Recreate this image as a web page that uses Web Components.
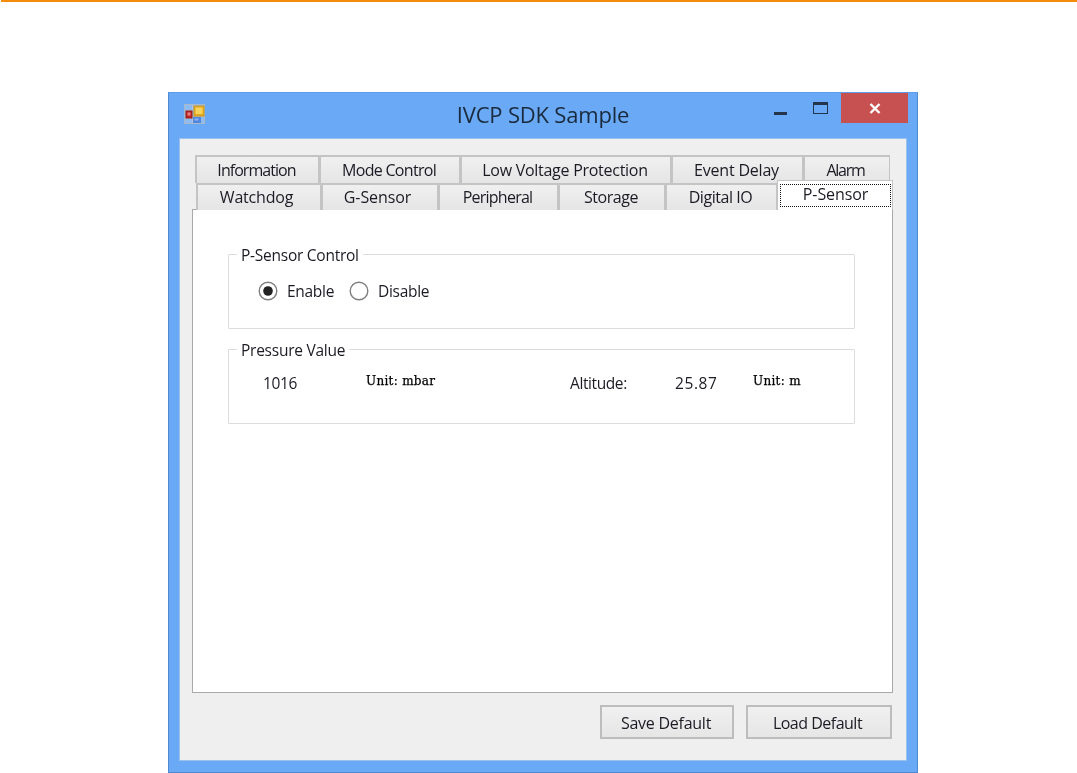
<!DOCTYPE html>
<html><head><meta charset="utf-8"><title>IVCP SDK Sample</title>
<style>
html,body{margin:0;padding:0;background:#fff;height:773px;overflow:hidden}
body{font-family:"Open Sans","Noto Sans",sans-serif;color:#1b1b1f}
.top{height:2px;margin-left:1px;background:#f58b0a}
ivcp-window{margin:90px 0 0 168px}
</style></head><body>
<div class="top"></div>
<ivcp-window title-text="IVCP SDK Sample">
  <ivcp-tabs slot="tabs">
    <div slot="row1" style="display:contents;--lh:26px">
      <ivcp-tab w="124" style="letter-spacing:-.95px">Information</ivcp-tab><ivcp-tab w="141" style="letter-spacing:-.7px">Mode Control</ivcp-tab><ivcp-tab w="211" style="letter-spacing:-.27px">Low Voltage Protection</ivcp-tab><ivcp-tab w="132" style="letter-spacing:-.2px">Event Delay</ivcp-tab><ivcp-tab w="87" style="letter-spacing:-1.3px;padding-right:3px">Alarm</ivcp-tab>
    </div>
    <div slot="row2" style="display:contents">
      <ivcp-tab w="125" style="letter-spacing:-.2px;padding-right:5px">Watchdog</ivcp-tab><ivcp-tab w="117" style="letter-spacing:-.1px;padding-right:5px">G-Sensor</ivcp-tab><ivcp-tab w="120" style="letter-spacing:-.75px">Peripheral</ivcp-tab><ivcp-tab w="107">Storage</ivcp-tab><ivcp-tab w="112">Digital IO</ivcp-tab><ivcp-tab w="116" selected style="letter-spacing:-.1px">P-Sensor</ivcp-tab>
    </div>
  </ivcp-tabs>
  <ivcp-panel slot="panel">
    <ivcp-group legend="P-Sensor Control">
      <div style="display:flex;gap:15px;padding:16px 0 0 29px">
        <ivcp-radio checked>Enable</ivcp-radio><ivcp-radio>Disable</ivcp-radio>
      </div>
    </ivcp-group>
    <ivcp-group legend="Pressure Value">
      <ivcp-readout></ivcp-readout>
    </ivcp-group>
  </ivcp-panel>
  <ivcp-button slot="actions" w="134" style="letter-spacing:-.25px;padding-right:2px">Save Default</ivcp-button>
  <ivcp-button slot="actions" w="146" style="letter-spacing:-.5px;padding-right:3px">Load Default</ivcp-button>
</ivcp-window>
<script>
function def(name, css, html, init){
  customElements.define(name, class extends HTMLElement{
    constructor(){super();const r=this.attachShadow({mode:'open'});r.innerHTML='<style>'+css+'</style>'+html;}
    connectedCallback(){ if(init) init(this); }
  });
}
def('ivcp-window',`
 :host{width:750px;height:681px;box-sizing:border-box;background:#69a9f5;border:1px solid #4f8ad0;border-top-color:#5d9de8;padding:0 10px 11px 10px;display:flex;flex-direction:column;filter:blur(.4px)}
 .title{height:45px;flex:none;display:flex;align-items:flex-start;position:relative}
 .icon{width:21px;height:20px;margin:11px 0 0 5px;flex:none}
 .t{position:absolute;left:0;right:0;top:6px;text-align:center;font-size:22px;line-height:30px;color:#1a2a3c;letter-spacing:-.2px}
 .ctl{margin-left:auto;display:flex;align-items:flex-start;position:relative;margin-right:-1px}
 .min{width:13px;height:3px;background:#24344a;margin:19px 26px 0 0}
 .max{width:15px;height:12px;box-sizing:border-box;border:1.5px solid #24344a;border-top-width:3px;margin:9px 13px 0 0}
 .close{width:67px;height:30px;background:#c75050;display:flex;align-items:center;justify-content:center}
 .close svg{margin-top:1px}
 .client{flex:1;background:#efefef;border:1px solid #9cc0ec;display:flex;flex-direction:column;padding:16px 13px 0 12px;min-height:0}
 .actions{display:flex;justify-content:flex-end;gap:12px;padding:12px 1px 0 0}
`,`<div class="title">
 <svg class="icon" viewBox="0 0 21 20"><rect x="0.5" y="0.5" width="20" height="19" fill="#8fbcf0" stroke="#a9b8ca"/><path d="M8.5 1V19 M1 6.5H9 M1 14.5H9 M9 12.5H20" stroke="#b5c3d4" fill="none"/><rect x="10" y="2" width="10" height="10" fill="#e3ab22" stroke="#c9961f"/><rect x="11.5" y="3.5" width="7" height="6.5" fill="#f6d35c"/><rect x="2" y="7" width="6" height="7" fill="#c42525" stroke="#8f1d1d"/><rect x="3.5" y="8.5" width="3" height="3" fill="#e88080"/><rect x="9" y="13" width="8" height="6" fill="#4f86de"/><rect x="10.5" y="14.5" width="4" height="2" fill="#8fb5ee"/></svg>
 <div class="t" id="t"></div>
 <div class="ctl"><div class="min"></div><div class="max"></div><div class="close"><svg width="12" height="11" viewBox="0 0 12 11"><path d="M1.5 1 L10.5 10 M10.5 1 L1.5 10" stroke="#fff" stroke-width="2.4"/></svg></div></div>
</div>
<div class="client"><slot name="tabs"></slot><slot name="panel"></slot><div class="actions"><slot name="actions"></slot></div></div>`,
 el=>{el.shadowRoot.getElementById('t').textContent=el.getAttribute('title-text')});

def('ivcp-tabs',`
 :host{display:block;position:relative;z-index:1;flex:none}
 .row{display:flex}
 .r1{height:28px;margin-left:3px}
 .r2{height:27px;margin-left:4px;align-items:flex-start}
`,`<div class="row r1"><slot name="row1"></slot></div><div class="row r2"><slot name="row2"></slot></div>`);

def('ivcp-tab',`
 :host{display:block;box-sizing:border-box;height:100%;flex:none;background:linear-gradient(#f0f0f0,#e5e5e5);border:2px solid #c4c4c4;border-bottom:0;border-right-width:1px;padding-right:2px;text-align:center;font-size:16px;line-height:var(--lh,24px);letter-spacing:-.45px;color:#1b1b24;white-space:nowrap}
 :host([selected]){background:#fff;border:1px solid #c4c4c4;border-bottom:0;height:30px;margin-top:-3px;position:relative;z-index:2;padding:3px 1px 0 2px;line-height:21px}
 .f{display:block}
 :host([selected]) .f{outline:1px dotted #111;outline-offset:-1px;height:23px}
`,`<span class="f"><slot></slot></span>`,
 el=>{el.style.width=el.getAttribute('w')+'px'});

def('ivcp-panel',`
 :host{display:flex;flex-direction:column;gap:10px;flex:none;height:484px;box-sizing:border-box;background:#fff;border:1px solid #a9a9a9;padding:34px 37px 0 35px;margin-top:-1px}
`,`<slot></slot>`);

def('ivcp-group',`
 :host{display:block;flex:none}
 fieldset{margin:0;padding:0;height:85px;box-sizing:border-box;border:1px solid #dcdcdc;border-radius:1px;min-width:0}
 legend{padding:0 4px 0 4px;margin-left:8px;font-size:15.5px;height:20px;line-height:22px;letter-spacing:-.25px;color:#1b1b24}
`,`<fieldset><legend id="l"></legend><div><slot></slot></div></fieldset>`,
 el=>{el.shadowRoot.getElementById('l').textContent=el.getAttribute('legend')});

def('ivcp-radio',`
 :host{display:inline-flex;align-items:center;font-size:15.5px;letter-spacing:-.3px;color:#1b1b24;line-height:22px}
 svg{margin-right:9px;flex:none}
`,`<svg id="s" width="20" height="20" viewBox="0 0 20 20"><circle cx="10" cy="10" r="8.8" fill="#fff" stroke="#7f7f7f" stroke-width="1.4"/></svg><slot></slot>`,
 el=>{if(el.hasAttribute('checked')){const c=document.createElementNS('http://www.w3.org/2000/svg','circle');c.setAttribute('cx',10);c.setAttribute('cy',10);c.setAttribute('r',4.8);c.setAttribute('fill','#222');el.shadowRoot.getElementById('s').appendChild(c);}});

def('ivcp-readout',`
 :host{display:grid;grid-template-columns:103px 204px 105px 78px auto;padding:13px 0 0 34px;align-items:center;color:#1b1b24}
 .v{font-size:15.5px;letter-spacing:-.4px;line-height:22px}
 .w{letter-spacing:.6px}
 .u{font-family:"DejaVu Serif",serif;font-size:12px;line-height:16px;margin-top:-5px;color:#000;letter-spacing:.3px;-webkit-text-stroke:.25px #000}
`,`<span class="v">1016</span><span class="u">Unit: mbar</span><span class="v">Altitude:</span><span class="v w">25.87</span><span class="u">Unit: m</span>`);

def('ivcp-button',`
 :host{display:block;box-sizing:border-box;height:34px;background:linear-gradient(#f0f0f0,#e6e6e6);border:2px solid #bdbdbd;text-align:center;font-size:16px;line-height:33px;letter-spacing:-.4px;color:#1b1b24}
`,`<slot></slot>`,
 el=>{el.style.width=el.getAttribute('w')+'px'});
</script>
</body></html>
